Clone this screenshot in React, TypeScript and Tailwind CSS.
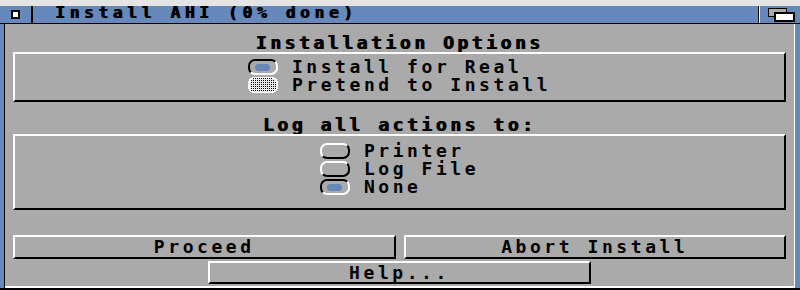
import React from 'react';

// Amiga Workbench 3.x style installer window
const txt = "font-['DejaVu_Sans_Mono',monospace] font-bold text-[18px] leading-[18px] tracking-[3.56px] text-black";
const heading = "font-['DejaVu_Sans_Mono',monospace] font-bold text-[18px] leading-[18px] tracking-[3.56px] text-black text-center [text-shadow:1px_0_0_#000]";
const bevelUp = 'border-2 border-t-white border-l-white border-r-black border-b-black';

function Radio({ state }: { state: 'on' | 'off' | 'ghost' }) {
  if (state === 'ghost') {
    return (
      <svg width="30" height="16" viewBox="0 0 30 16" shapeRendering="crispEdges">
        <defs>
          <pattern id="dith" width="2" height="2" patternUnits="userSpaceOnUse">
            <rect width="2" height="2" fill="#e8e8e8" />
            <rect x="1" y="1" width="1" height="1" fill="#000000" />
          </pattern>
        </defs>
        <rect x="0" y="0" width="30" height="16" rx="6" fill="#ffffff" />
        <rect x="2" y="1" width="26" height="14" rx="5" fill="url(#dith)" />
      </svg>
    );
  }
  return (
    <div
      className={
        state === 'on'
          ? 'w-[30px] h-[16px] rounded-[7px] border-2 border-t-black border-l-black border-r-white border-b-white flex items-center justify-center'
          : 'w-[30px] h-[16px] rounded-[7px] border-2 border-t-white border-l-white border-r-black border-b-black'
      }
    >
      {state === 'on' && <div className="w-[15px] h-[7px] rounded-full bg-[#6688bb]" />}
    </div>
  );
}

function Option({ label, state }: { label: string; state: 'on' | 'off' | 'ghost' }) {
  return (
    <div className="flex items-center gap-[14px] h-[18px]">
      <Radio state={state} />
      <span className={txt}>{label}</span>
    </div>
  );
}

function Button({ label, className }: { label: string; className: string }) {
  return (
    <div className={`${bevelUp} ${className} flex items-center justify-center`}>
      <span className={txt}>{label}</span>
    </div>
  );
}

export default function App() {
  return (
    <div className="w-[800px] h-[290px] bg-[#e4e4e4] pt-[6px] overflow-hidden">
      {/* title bar */}
      <div className="h-[17px] flex bg-[#6688bb]">
        <div className="w-[31px] flex items-center justify-center">
          <div className="w-[9px] h-[9px] border-2 border-black bg-white" />
        </div>
        <div className="w-[2px] bg-black" />
        <div className="flex-1 pl-[22px] font-['DejaVu_Sans_Mono',monospace] font-bold text-[16px] leading-[14px] tracking-[4.77px] text-black [text-shadow:1px_0_0_#000]">
          Install AHI (0% done)
        </div>
        <div className="w-px bg-black" />
        <div className="w-px bg-white" />
        <div className="w-[40px]">
          <svg width="40" height="17" viewBox="0 0 40 17" shapeRendering="crispEdges">
            <rect x="8.5" y="2.5" width="18" height="8" fill="#aaaaaa" stroke="#000" strokeWidth="1" />
            <rect x="15" y="7" width="19" height="8" fill="#ffffff" stroke="#000" strokeWidth="2" />
          </svg>
        </div>
      </div>
      <div className="h-px bg-black" />

      {/* window body */}
      <div className="flex h-[264px]">
        <div className="w-[4px] bg-[#6688bb]" />
        <div className="w-px bg-black" />
        <div className="flex-1 flex flex-col">
          <div className="flex-1 bg-[#aaaaaa] px-[8px] pt-[10px] flex flex-col">
            <div className={heading}>Installation Options</div>
            <div className={`${bevelUp} h-[50px] pt-[4px] flex justify-center`}>
              <div className="flex flex-col">
                <Option label="Install for Real" state="on" />
                <Option label="Pretend to Install" state="ghost" />
              </div>
            </div>

            <div className={`${heading} mt-[14px]`}>Log all actions to:</div>
            <div className={`${bevelUp} h-[76px] pt-[6px] flex justify-center`}>
              <div className="flex flex-col">
                <Option label="Printer" state="off" />
                <Option label="Log File" state="off" />
                <Option label="None" state="on" />
              </div>
            </div>

            <div className="grid grid-cols-2 gap-[8px] mt-[25px]">
              <Button label="Proceed" className="h-[24px]" />
              <Button label="Abort Install" className="h-[24px]" />
            </div>
            <div className="flex justify-center mt-[2px]">
              <Button label="Help..." className="w-[383px] h-[23px]" />
            </div>
          </div>
          <div className="h-[2px] bg-white" />
        </div>
        <div className="w-px bg-white" />
        <div className="w-[5px] bg-[#6688bb]" />
      </div>
      <div className="h-[2px] bg-black" />
    </div>
  );
}
